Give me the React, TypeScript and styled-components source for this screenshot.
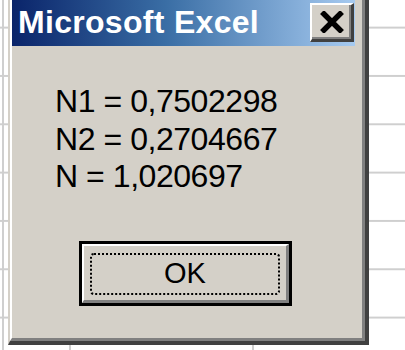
import React from "react";
import styled, { createGlobalStyle } from "styled-components";

const GlobalStyle = createGlobalStyle`
    html, body {
        margin: 0;
        padding: 0;
        background: #ffffff;
        overflow: hidden;
    }
`;

const Sheet = styled.div`
    width: 405px;
    height: 350px;
    overflow: hidden;
    background-color: #ffffff;
    background-image:
        linear-gradient(90deg, transparent 2px, #cfcfcf 2px, #cfcfcf 4px, transparent 4px),
        linear-gradient(90deg, transparent 69px, #cfcfcf 69px, #cfcfcf 71px, transparent 71px),
        linear-gradient(90deg, transparent 252px, #cfcfcf 252px, #cfcfcf 254px, transparent 254px),
        linear-gradient(180deg, transparent 27px, #cfcfcf 27px, #cfcfcf 29px, transparent 29px);
    background-size: 100% 100%, 100% 100%, 100% 100%, 100% 48.33px;
    background-repeat: no-repeat, no-repeat, no-repeat, repeat-y;
    background-position: 0 0, 0 0, 0 0, 0 0;
`;

const Window = styled.div`
    width: 361px;
    margin: -10px 0 0 8px;
    box-sizing: border-box;
    border-style: solid;
    border-width: 2px 4px 4px 2px;
    border-color: #d4d0c8 #404040 #404040 #d4d0c8;
    background: #d4d0c8;
`;

const WindowInner = styled.div`
    border-style: solid;
    border-width: 2px 3px 3px 2px;
    border-color: #ffffff #808080 #808080 #ffffff;
    padding: 4px 7px 0 0;
`;

const TitleBar = styled.div`
    height: 48px;
    display: flex;
    align-items: center;
    justify-content: space-between;
    padding: 0 1px 0 6px;
    background: linear-gradient(90deg, #0a246a 0%, #3a6ea5 45%, #a6caf0 100%);
`;

const Title = styled.span`
    font-family: "Liberation Sans", Arial, sans-serif;
    font-weight: bold;
    font-size: 32px;
    letter-spacing: 0.3px;
    color: #ffffff;
    white-space: nowrap;
`;

const CloseButton = styled.button`
    width: 44px;
    height: 39px;
    padding: 0;
    box-sizing: border-box;
    display: flex;
    align-items: center;
    justify-content: center;
    background: #d4d0c8;
    border-style: solid;
    border-width: 2px 3px 3px 2px;
    border-color: #ffffff #404040 #404040 #ffffff;
    box-shadow: inset -2px -2px 0 #808080;
`;

const Body = styled.div`
    padding: 37px 0 32px 0;
`;

const Message = styled.div`
    padding-left: 43px;
    font-family: "Liberation Sans", Arial, sans-serif;
    font-size: 32px;
    letter-spacing: -0.45px;
    line-height: 37.5px;
    color: #000000;
`;

const Line = styled.div`
    white-space: nowrap;
`;

const ButtonRow = styled.div`
    margin-top: 45px;
    padding-left: 67px;
`;

const OkButton = styled.button`
    width: 213px;
    height: 65px;
    padding: 0;
    box-sizing: border-box;
    border: 3px solid #000000;
    background: #d4d0c8;
    display: block;
`;

const Bevel = styled.span`
    display: block;
    height: 100%;
    box-sizing: border-box;
    border-style: solid;
    border-width: 2px 3px 3px 2px;
    border-color: #ffffff #808080 #808080 #ffffff;
    padding: 7px 6px 5px 6px;
`;

const Focus = styled.span`
    display: flex;
    height: 100%;
    box-sizing: border-box;
    align-items: center;
    justify-content: center;
    border: 2px dotted #000000;
    border-radius: 4px;
    font-family: "Liberation Sans", Arial, sans-serif;
    font-size: 29px;
    color: #000000;
`;

const CloseIcon = () => (
    <svg width="26" height="22" viewBox="0 0 26 22">
        <path d="M3 1 L23 21 M23 1 L3 21" stroke="#000" strokeWidth="5.5" strokeLinecap="butt" />
    </svg>
);

const lines = ["N1 = 0,7502298", "N2 = 0,2704667", "N = 1,020697"];

const App = () => {
    return (
        <Sheet>
            <GlobalStyle />
            <Window>
                <WindowInner>
                    <TitleBar>
                        <Title>Microsoft Excel</Title>
                        <CloseButton aria-label="Close">
                            <CloseIcon />
                        </CloseButton>
                    </TitleBar>
                    <Body>
                        <Message>
                            {lines.map((l) => (
                                <Line key={l}>{l}</Line>
                            ))}
                        </Message>
                        <ButtonRow>
                            <OkButton>
                                <Bevel>
                                    <Focus>OK</Focus>
                                </Bevel>
                            </OkButton>
                        </ButtonRow>
                    </Body>
                </WindowInner>
            </Window>
        </Sheet>
    );
};

export default App;
